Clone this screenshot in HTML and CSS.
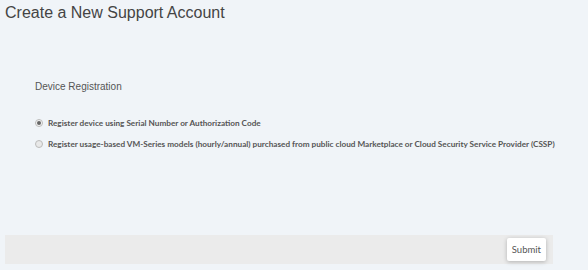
FILE: index.html
```html
<!DOCTYPE html>
<html lang="en">
<head>
  <meta charset="UTF-8" />
  <title>Create a New Support Account</title>
  <link rel="stylesheet" href="styles.css">
</head>
<body>
  <div class="page">
    <h1 class="title">Create a New Support Account</h1>

    <div class="section">
      <h2 class="section-title">Device Registration</h2>
      <label class="option">
        <input type="radio" name="reg" checked>
        <span>Register device using Serial Number or Authorization Code</span>
      </label>
      <label class="option">
        <input type="radio" name="reg">
        <span>Register usage-based VM-Series models (hourly/annual) purchased from public cloud Marketplace or Cloud Security Service Provider (CSSP)</span>
      </label>
    </div>

    <div class="footer">
      <button class="submit">Submit</button>
    </div>
  </div>
</body>
</html>
```

FILE: styles.css
```css
* {
  margin: 0;
  padding: 0;
  box-sizing: border-box;
}
html, body {
  background: #f0f4f8;
  height: 100%;
  overflow: hidden;
}
body {
  font-family: "Liberation Sans", Arial, sans-serif;
  color: #444;
}
.page {
  height: 270px;
  display: flex;
  flex-direction: column;
  padding: 3px 35px 6px 5px;
}
.title {
  font-size: 16px;
  font-weight: normal;
  color: #444;
  line-height: 20px;
}
.section {
  flex: 1;
  padding: 58px 0 0 30px;
}
.section-title {
  font-size: 10px;
  font-weight: normal;
  color: #555;
  line-height: 12px;
  margin-bottom: 24px;
}
.option {
  display: flex;
  align-items: center;
  gap: 5px;
  font-family: Lato, sans-serif;
  font-weight: bold;
  font-size: 8.2px;
  color: #555;
  height: 12px;
  margin-bottom: 9px;
  white-space: nowrap;
}
.option input {
  appearance: none;
  flex-shrink: 0;
  width: 8px;
  height: 8px;
  margin: 0;
  border: 1px solid #bbb;
  border-radius: 50%;
  background: #e8e8e8;
  display: grid;
  place-items: center;
}
.option input:checked::after {
  content: "";
  width: 4px;
  height: 4px;
  border-radius: 50%;
  background: #666;
}
.option input:checked {
  background: #f4f4f4;
}
.footer {
  height: 29px;
  background: #ebebeb;
  display: flex;
  align-items: center;
  justify-content: flex-end;
  padding-right: 7px;
}
.submit {
  font-family: Lato, sans-serif;
  font-size: 9.5px;
  color: #555;
  background: #fff;
  border: none;
  border-radius: 2px;
  padding: 0 5px;
  height: 23px;
  box-shadow: 0 1px 4px rgba(0,0,0,0.25);
}
```
